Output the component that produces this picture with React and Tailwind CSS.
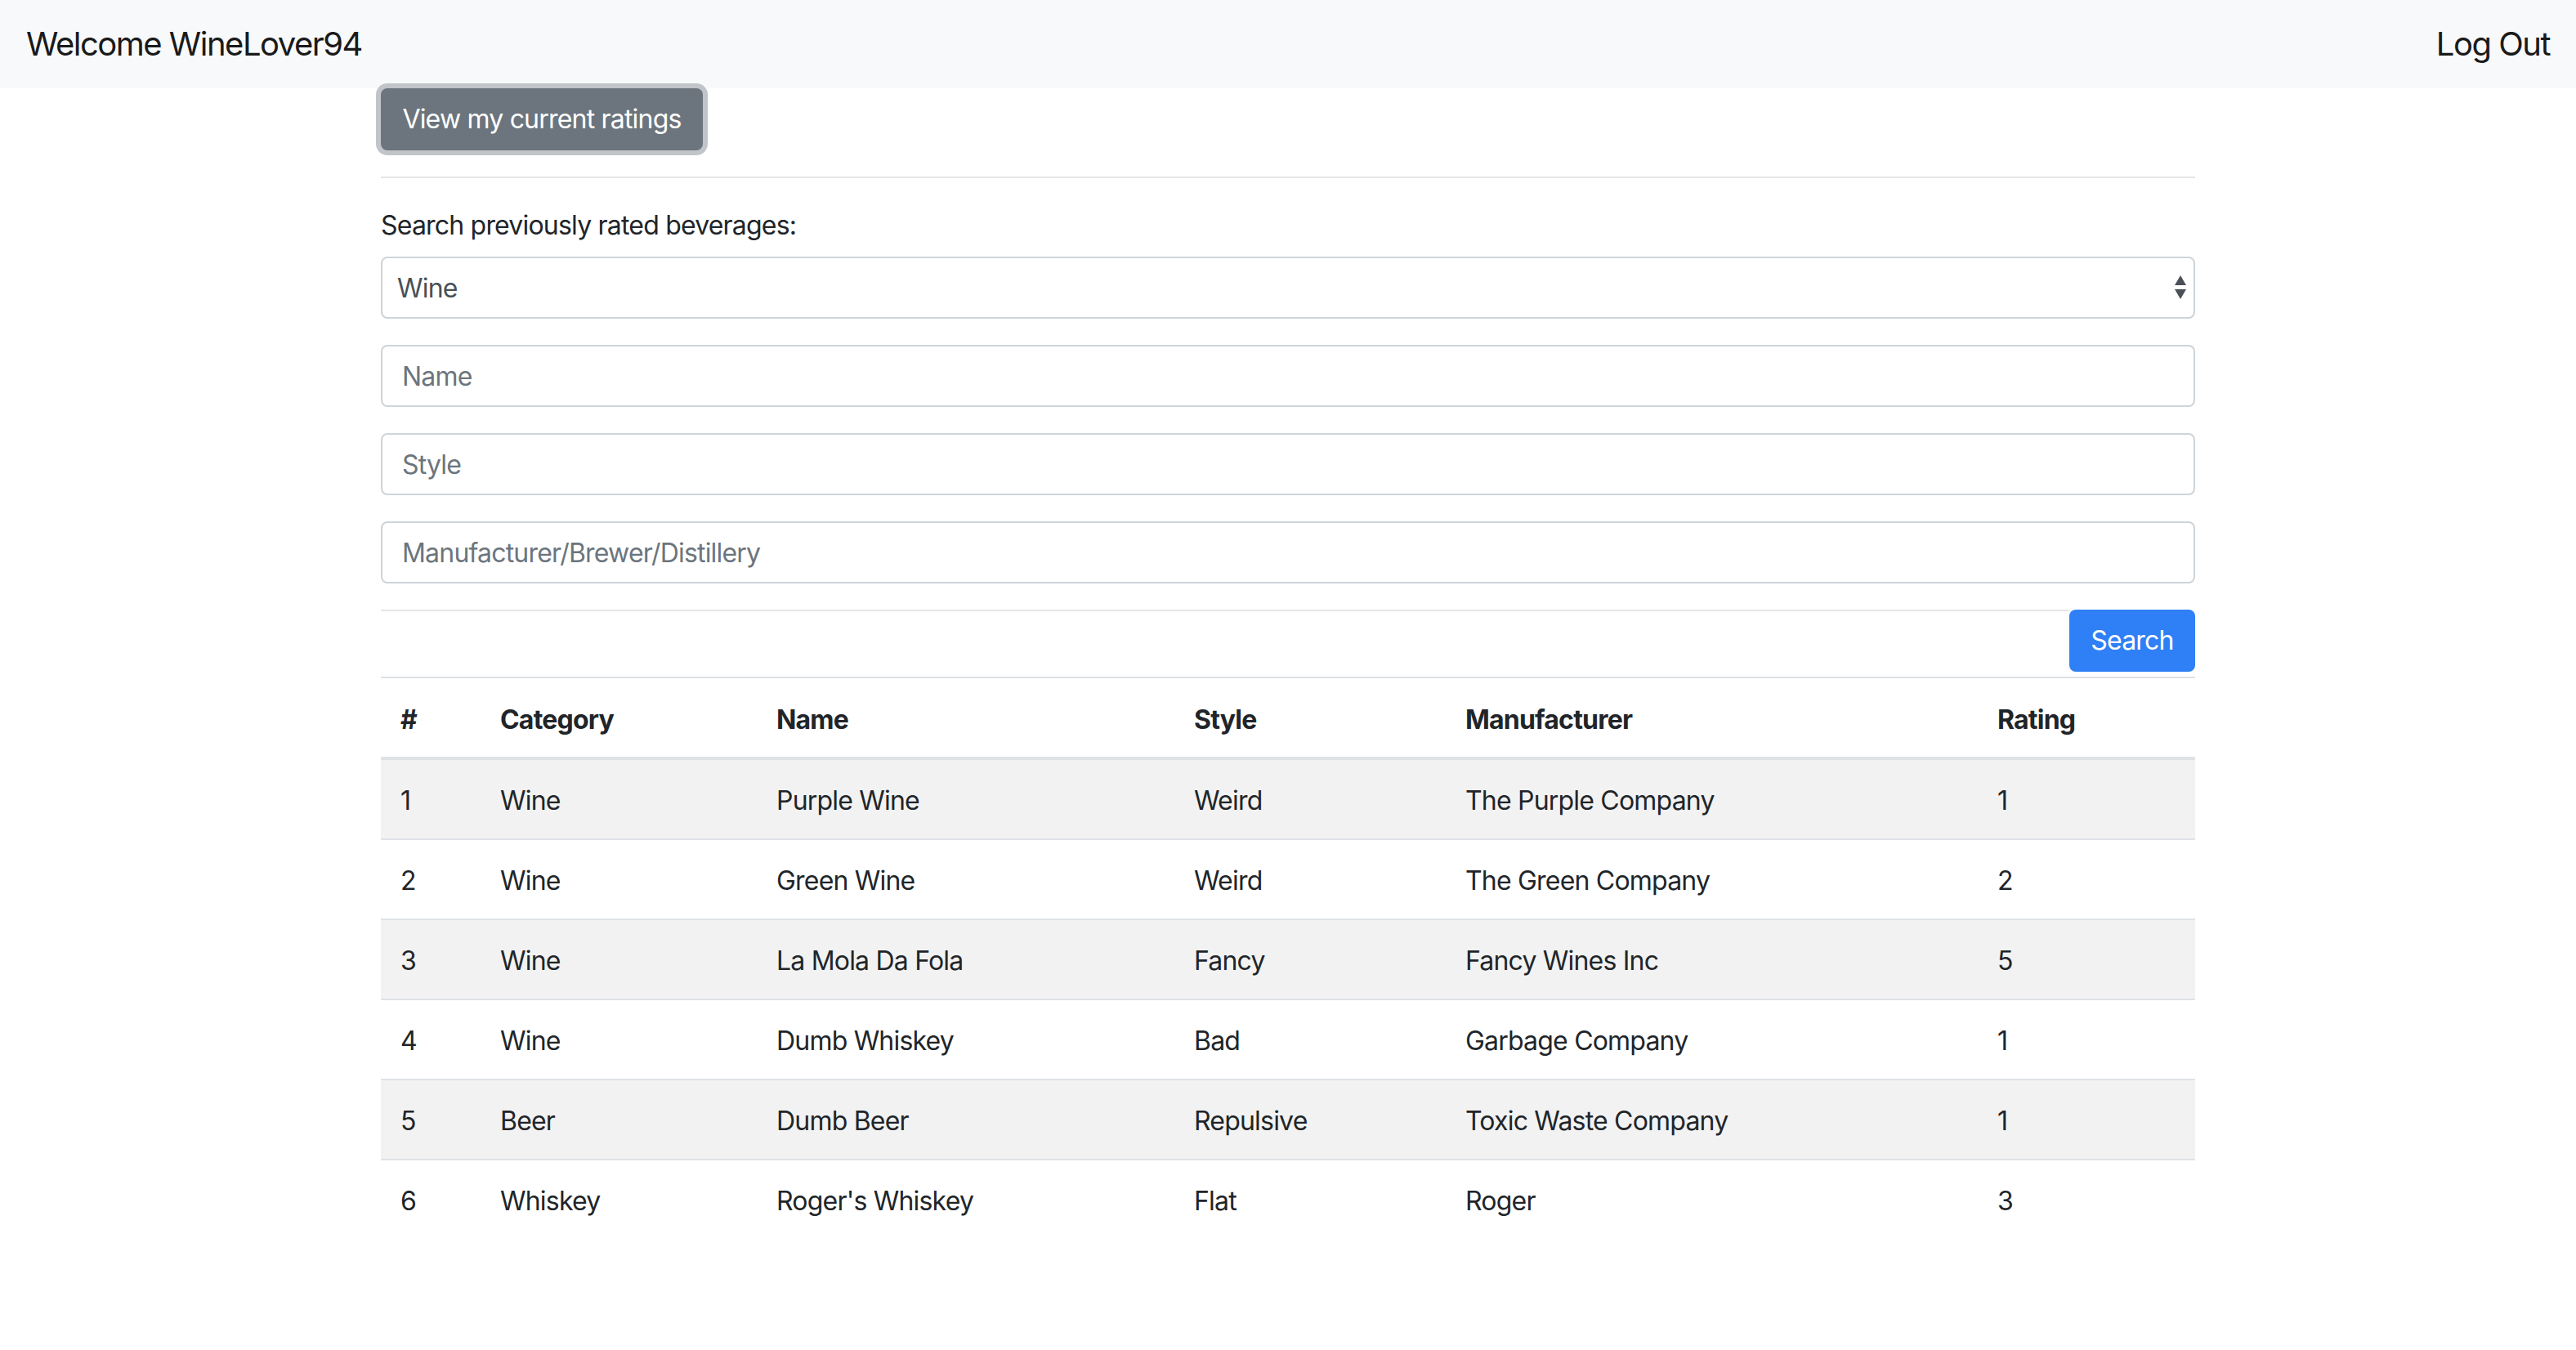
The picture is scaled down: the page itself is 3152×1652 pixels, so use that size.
import React, { useState } from "react";

const ratings = [
  { id: 1, category: "Wine", name: "Purple Wine", style: "Weird", maker: "The Purple Company", rating: 1 },
  { id: 2, category: "Wine", name: "Green Wine", style: "Weird", maker: "The Green Company", rating: 2 },
  { id: 3, category: "Wine", name: "La Mola Da Fola", style: "Fancy", maker: "Fancy Wines Inc", rating: 5 },
  { id: 4, category: "Wine", name: "Dumb Whiskey", style: "Bad", maker: "Garbage Company", rating: 1 },
  { id: 5, category: "Beer", name: "Dumb Beer", style: "Repulsive", maker: "Toxic Waste Company", rating: 1 },
  { id: 6, category: "Whiskey", name: "Roger's Whiskey", style: "Flat", maker: "Roger", rating: 3 },
];

const font = { fontFamily: "Inter, 'Noto Sans', sans-serif" };

function TextInput({ placeholder }) {
  return (
    <input
      type="text"
      placeholder={placeholder}
      className="block w-full h-[76px] mb-[32px] px-[24px] text-[32px] tracking-[-0.8px] text-[#495057] placeholder:text-[#6c757d] bg-white border-2 border-[#ced4da] rounded-[8px] outline-none"
    />
  );
}

export default function App() {
  const [category, setCategory] = useState("Wine");

  return (
    <div className="min-h-screen bg-white text-[#212529] tracking-[-0.8px]" style={font}>
      <nav className="h-[108px] bg-[#f8f9fa] flex items-center justify-between px-[32px] text-[40px] tracking-[-1.5px] text-[#1a1a1a]">
        <span>Welcome WineLover94</span>
        <a href="#" className="text-[#1a1a1a]">Log Out</a>
      </nav>

      <div className="w-[2220px] mx-auto">
        <button className="h-[76px] w-[394px] rounded-[8px] bg-[#6c757d] text-white text-[32px] ring-6 ring-[#c1c4c8]">
          View my current ratings
        </button>

        <div className="mt-[32px] mb-[32px] border-t-2 border-[#e6e6e6]" />

        <label className="block text-[32px] leading-[48px] mb-[16px] pt-[2px]">Search previously rated beverages:</label>

        <div className="relative mb-[32px] -mt-[2px]">
          <select
            value={category}
            onChange={(e) => setCategory(e.target.value)}
            className="block w-full h-[76px] pl-[18px] pr-[60px] pt-[2px] text-[32px] tracking-[-0.8px] text-[#495057] bg-white border-2 border-[#ced4da] rounded-[8px] appearance-none outline-none"
          >
            <option>Wine</option>
            <option>Beer</option>
            <option>Whiskey</option>
          </select>
          <svg className="absolute right-[10px] top-[22px] pointer-events-none" width="16" height="32" viewBox="0 0 16 32">
            <path d="M8 1 L15 13 L1 13 Z" fill="#495057" />
            <path d="M1 18 L15 18 L8 30 Z" fill="#495057" />
          </svg>
        </div>

        <TextInput placeholder="Name" />
        <TextInput placeholder="Style" />
        <TextInput placeholder="Manufacturer/Brewer/Distillery" />

        <div className="flex items-start">
          <div className="flex-1 border-t-2 border-[#e6e6e6]" />
          <button className="h-[76px] w-[154px] rounded-[8px] bg-[#2f7ff6] text-white text-[32px]">Search</button>
        </div>

        <table className="w-full mt-[6px] table-fixed text-[32px] leading-[48px]">
          <colgroup>
            <col className="w-[122px]" />
            <col className="w-[338px]" />
            <col className="w-[511px]" />
            <col className="w-[332px]" />
            <col className="w-[651px]" />
            <col className="w-[266px]" />
          </colgroup>
          <thead>
            <tr className="text-left font-bold">
              <th className="px-[24px] pt-[27px] pb-[21px] border-t-2 border-b-4 border-[#dee2e6]">#</th>
              <th className="px-[24px] pt-[27px] pb-[21px] border-t-2 border-b-4 border-[#dee2e6]">Category</th>
              <th className="px-[24px] pt-[27px] pb-[21px] border-t-2 border-b-4 border-[#dee2e6]">Name</th>
              <th className="px-[24px] pt-[27px] pb-[21px] border-t-2 border-b-4 border-[#dee2e6]">Style</th>
              <th className="px-[24px] pt-[27px] pb-[21px] border-t-2 border-b-4 border-[#dee2e6]">Manufacturer</th>
              <th className="px-[24px] pt-[27px] pb-[21px] border-t-2 border-b-4 border-[#dee2e6]">Rating</th>
            </tr>
          </thead>
          <tbody>
            {ratings.map((r, i) => (
              <tr key={r.id} className={i % 2 === 0 ? "bg-[#f2f2f2]" : "bg-white"}>
                <td className="px-[24px] pt-[26px] pb-[22px] border-t-2 border-[#dee2e6]">{r.id}</td>
                <td className="px-[24px] pt-[26px] pb-[22px] border-t-2 border-[#dee2e6]">{r.category}</td>
                <td className="px-[24px] pt-[26px] pb-[22px] border-t-2 border-[#dee2e6]">{r.name}</td>
                <td className="px-[24px] pt-[26px] pb-[22px] border-t-2 border-[#dee2e6]">{r.style}</td>
                <td className="px-[24px] pt-[26px] pb-[22px] border-t-2 border-[#dee2e6]">{r.maker}</td>
                <td className="px-[24px] pt-[26px] pb-[22px] border-t-2 border-[#dee2e6]">{r.rating}</td>
              </tr>
            ))}
          </tbody>
        </table>
      </div>
    </div>
  );
}
